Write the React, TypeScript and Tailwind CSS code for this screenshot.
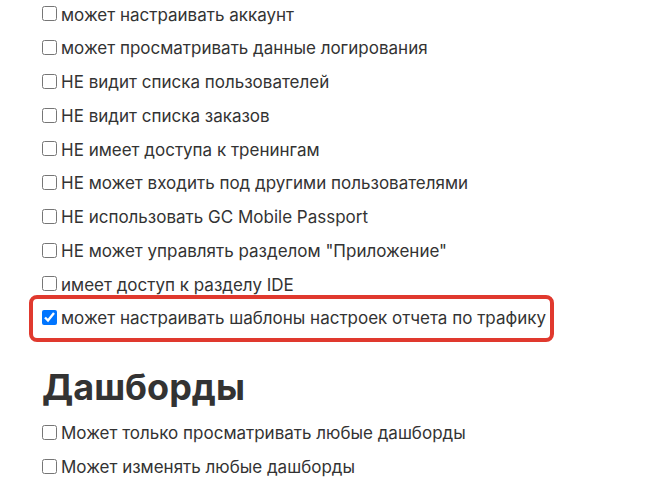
const PERMISSIONS = [
  { label: "может настраивать аккаунт" },
  { label: "может просматривать данные логирования" },
  { label: "НЕ видит списка пользователей" },
  { label: "НЕ видит списка заказов" },
  { label: "НЕ имеет доступа к тренингам" },
  { label: "НЕ может входить под другими пользователями" },
  { label: "НЕ использовать GC Mobile Passport" },
  { label: "НЕ может управлять разделом \"Приложение\"" },
  { label: "имеет доступ к разделу IDE" },
];

const DASHBOARDS = ["Может только просматривать любые дашборды", "Может изменять любые дашборды"];

function Row({ label, checked = false }: { label: string; checked?: boolean }) {
  return (
    <label className="flex h-[33.75px] items-center gap-[4px]">
      <input type="checkbox" defaultChecked={checked} className="m-0 h-[15px] w-[15px] accent-[#0075ff]" />
      <span className="pt-[3px]">{label}</span>
    </label>
  );
}

export default function App() {
  return (
    <div
      className="h-[500px] w-[665px] overflow-hidden bg-white pl-[42px] text-[17px] text-[#333333]"
      style={{ fontFamily: "Inter, 'Noto Sans', sans-serif" }}
    >
      <div className="-mt-[3px]">
        {PERMISSIONS.map((p, i) => (
          <Row key={i} label={p.label} />
        ))}
        <div className="relative">
          <Row label="может настраивать шаблоны настроек отчета по трафику" checked />
          <span className="pointer-events-none absolute -top-[6px] -left-[13px] h-[47px] w-[525px] rounded-[8px] border-[4px] border-[#e0392e]" />
        </div>
      </div>

      <h1 className="mt-[31px] text-[36px] leading-[1.2] font-bold">Дашборды</h1>

      <div className="mt-[7px]">
        {DASHBOARDS.map((d, i) => (
          <Row key={i} label={d} />
        ))}
      </div>
    </div>
  );
}
